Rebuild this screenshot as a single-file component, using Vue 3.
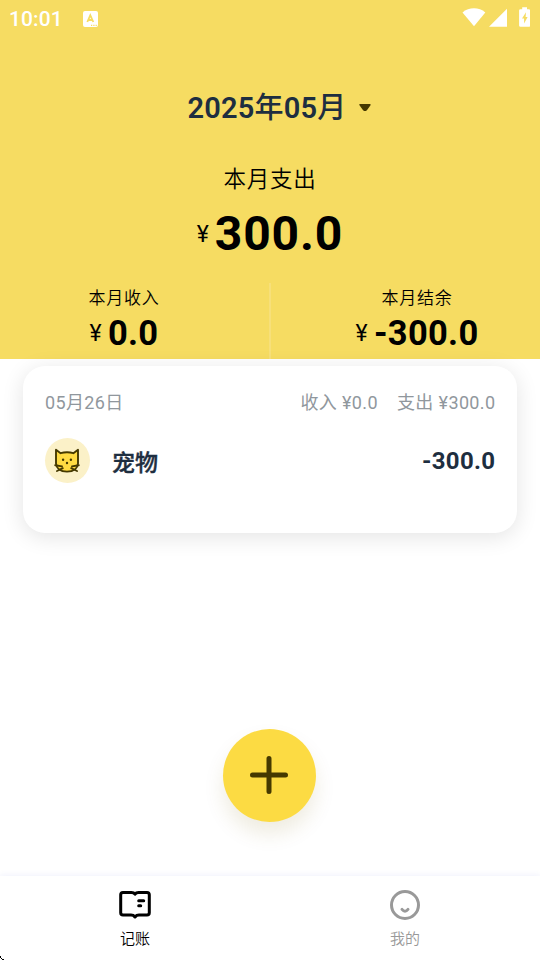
<script setup>
const halves = [
  { label: '本月收入', value: '0.0', side: 'income' },
  { label: '本月结余', value: '-300.0', side: 'balance' },
]
</script>

<template>
  <div class="screen">
    <header class="hero">
      <div class="status">
        <span class="clock">10:01</span>
        <svg class="badge" width="15" height="16" viewBox="0 0 15 16">
          <rect width="15" height="16" rx="2" fill="#fff" />
          <path d="M4.3 11 7.3 4.2 10.3 11M5.4 9h3.8" fill="none" stroke="#f6dc62" stroke-width="1.8" />
          <path d="M8 14.4h1.2M10.3 14.4h1.2M12.6 14.4h1.2" stroke="#f6dc62" stroke-width="1.2" />
        </svg>
        <svg class="signals" width="70" height="22" viewBox="0 0 70 22">
          <path d="M2.5 6.4C9 .9 19 .9 25.3 6.4L14 20.3Z" fill="#fff" />
          <path d="M29 20.8 47 2.8V20.8Z" fill="#fff" />
          <path d="M60.5 3.2h1.7V1.2h4.8v2h1.8q1.4 0 1.4 1.4v14.8q0 1.4-1.4 1.4h-8.3q-1.4 0-1.4-1.4V4.6q0-1.4 1.4-1.4Z" fill="#fff" />
          <path d="M66 6.2 62 12.6h2.1v4.8L67.6 11h-2Z" fill="#f6dc62" />
        </svg>
      </div>
      <div class="month">
        <span>2025<span class="han">年</span>05<span class="han">月</span></span>
        <svg width="14" height="10" viewBox="0 0 14 10">
          <path d="M2.2 1.8h9.6L8.2 6.6Q7 7.8 5.8 6.6Z" fill="#453900" stroke="#453900" stroke-width="1.8" stroke-linejoin="round" />
        </svg>
      </div>
      <div class="total-label">本月支出</div>
      <div class="total"><span class="yen">¥</span><b>300.0</b></div>
      <div class="halves">
        <div v-for="h in halves" :key="h.side" class="half" :class="h.side">
          <div class="half-label">{{ h.label }}</div>
          <div class="half-value"><span class="yen">¥</span><b>{{ h.value }}</b></div>
        </div>
      </div>
    </header>

    <main class="content">
      <section class="card">
        <div class="day">
          <span class="date">05月26日</span>
          <span>收入 ¥0.0</span>
          <span class="spent">支出 ¥300.0</span>
        </div>
        <div class="entry">
          <span class="avatar">
            <svg width="28" height="28" viewBox="0 0 28 28" fill="none" stroke="#453900" stroke-width="1.9" stroke-linecap="round" stroke-linejoin="round">
              <path d="M3 2.8 7.6 6.2Q14 4.2 20.4 6.2L25 2.8V16.5Q24.2 24.6 14 24.6 3.8 24.6 3 16.5Z" fill="#ffdb42" />
              <path d="M2.2 18.2 9 19.4M4 24 9.8 21.2M25.8 18.2 19 19.4M24 24 18.2 21.2" />
              <path d="M10.1 12.6v.1M17.9 12.6v.1M14 15.9v.1" stroke-width="2.4" />
            </svg>
          </span>
          <span class="name">宠物</span>
          <b class="amount">-300.0</b>
        </div>
      </section>
      <button class="add" aria-label="+">
        <svg width="40" height="40" viewBox="0 0 40 40">
          <path d="M20 3.5v33M3.5 20h33" stroke="#453900" stroke-width="5" stroke-linecap="round" />
        </svg>
      </button>
    </main>

    <nav class="tabs">
      <div class="tab">
        <svg width="34" height="32" viewBox="0 0 34 32" fill="none" stroke="#000" stroke-width="3" stroke-linejoin="round" stroke-linecap="round">
          <path d="M5 3.5h8.5Q15.8 3.5 17 5.2 18.2 3.5 20.5 3.5H29Q31.3 3.5 31.3 5.8V23.8Q31.3 26.1 29 26.1H21Q18.5 26.1 17 28 15.5 26.1 13 26.1H5Q2.7 26.1 2.7 23.8V5.8Q2.7 3.5 5 3.5Z" />
          <path d="M20.7 11.8h5M20.7 16.8h2" />
        </svg>
        <span>记账</span>
      </div>
      <div class="tab muted">
        <svg width="34" height="32" viewBox="0 0 34 32" fill="none" stroke="#999" stroke-width="3" stroke-linecap="round">
          <circle cx="17" cy="16" r="13.5" />
          <path d="M14 20.4q3 3.6 6 0" />
        </svg>
        <span>我的</span>
      </div>
      <svg class="corner" width="4" height="4" viewBox="0 0 4 4">
        <path d="M0 0h1v2h-1zM1 2h1v1h-1zM2 3h2v1h-2z" fill="#000" />
      </svg>
    </nav>
  </div>
</template>

<style>
body {
  margin: 0;
  background: #fff;
}
</style>

<style scoped>
.screen {
  width: 540px;
  height: 960px;
  display: flex;
  flex-direction: column;
  overflow: hidden;
  background: #fff;
  color: #000;
  font-family: Roboto, "Noto Sans CJK SC", sans-serif;
  letter-spacing: 0.7px;
}
.hero {
  height: 359px;
  flex: none;
  display: flex;
  flex-direction: column;
  align-items: center;
  background: #f6dc62;
}
.status {
  box-sizing: border-box;
  width: 540px;
  height: 37px;
  padding: 0 10px 0 9px;
  display: flex;
  align-items: center;
  color: #fff;
}
.clock {
  width: 74px;
  padding-top: 1px;
  font-size: 21px;
  font-weight: 500;
  line-height: 37px;
  letter-spacing: 0.1px;
}
.signals {
  margin-left: auto;
  margin-bottom: 4px;
}
.month {
  margin-top: 51px;
  margin-left: 19px;
  height: 40px;
  display: flex;
  align-items: center;
  gap: 11px;
  color: #1e2e40;
  font-size: 29px;
  font-weight: 600;
  line-height: 40px;
  letter-spacing: 0.2px;
}
.han {
  font-weight: 500;
}
.total-label {
  margin-top: 35px;
  font-size: 22.5px;
  line-height: 32px;
  font-weight: 350;
}
.total {
  margin-top: 7px;
  height: 64px;
  display: flex;
  align-items: center;
  gap: 5px;
  font-size: 48px;
  line-height: 64px;
  letter-spacing: 0.9px;
}
.yen {
  font-size: 23px;
  padding-top: 1px;
}
.halves {
  width: 540px;
  margin-top: 17px;
  flex: 1;
  display: flex;
}
.half {
  width: 269px;
  box-sizing: border-box;
  display: flex;
  flex-direction: column;
  align-items: center;
}
.income {
  width: 271px;
  padding-right: 21px;
  border-right: 2px solid #f7e07a;
}
.balance {
  padding-left: 23px;
}
.half-label {
  margin-top: -1px;
  font-size: 17px;
  line-height: 32px;
  font-weight: 350;
}
.half-value {
  margin-top: -1px;
  height: 40px;
  display: flex;
  align-items: center;
  gap: 6px;
  font-size: 34.5px;
  line-height: 40px;
  letter-spacing: 0.3px;
}
.content {
  flex: 1;
  display: flex;
  flex-direction: column;
  align-items: center;
}
.card {
  box-sizing: border-box;
  width: 494px;
  height: 167px;
  margin-top: 7px;
  padding: 21px 21.5px 21px 22px;
  border-radius: 22px;
  background: #fff;
  box-shadow: 0 4px 22px rgba(0, 0, 0, 0.11);
}
.day {
  display: flex;
  height: 32px;
  align-items: center;
  font-size: 18px;
  line-height: 32px;
  letter-spacing: 0.38px;
  color: #90979d;
}
.date {
  margin-right: auto;
}
.spent {
  margin-left: 19px;
}
.entry {
  margin-top: 19px;
  display: flex;
  align-items: center;
  color: #1e2e40;
  font-size: 23px;
}
.avatar {
  box-sizing: border-box;
  width: 45px;
  height: 45px;
  padding-right: 1px;
  border-radius: 50%;
  display: grid;
  place-items: center;
  background: #fbf1c8;
}
.name {
  margin-left: 22px;
  font-weight: 500;
  letter-spacing: 0;
  -webkit-text-stroke: 0.4px #1e2e40;
}
.amount {
  margin-left: auto;
  font-size: 24px;
  letter-spacing: 0.35px;
}
.add {
  width: 93px;
  height: 93px;
  margin: 196px 1px 0 0;
  padding: 0 1px 1px 0;
  border: 0;
  border-radius: 50%;
  display: grid;
  place-items: center;
  background: #fcdb43;
  box-shadow: 0 12px 20px rgba(120, 100, 0, 0.12);
}
.tabs {
  height: 84px;
  flex: none;
  display: flex;
  background: #fff;
  box-shadow: 0 -1px 6px rgba(70, 80, 220, 0.08);
  position: relative;
}
.tab {
  width: 270px;
  padding-top: 13px;
  display: flex;
  flex-direction: column;
  align-items: center;
  font-size: 15px;
  line-height: 24px;
  letter-spacing: 0;
  font-weight: 350;
}
.tab span {
  margin-top: 6px;
}
.muted {
  color: #999;
}
.corner {
  position: absolute;
  left: 0;
  bottom: 0;
}
</style>
